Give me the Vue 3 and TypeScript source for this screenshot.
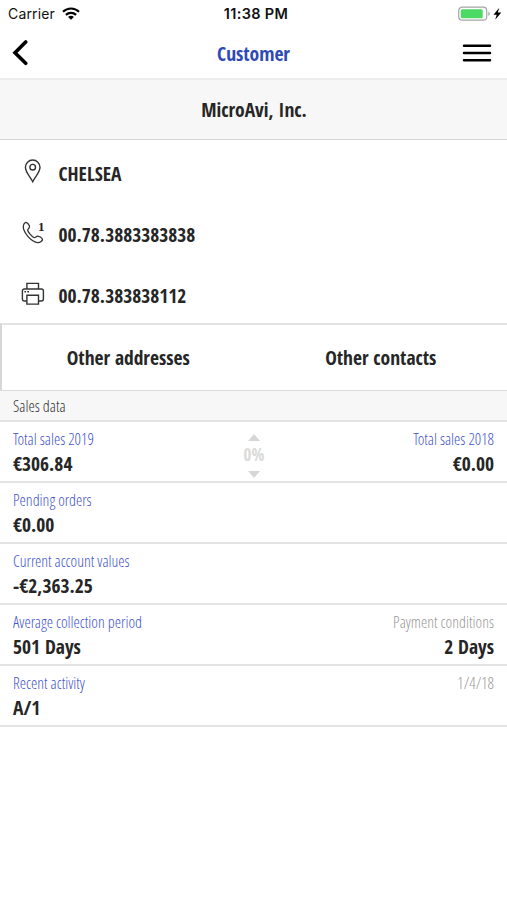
<script setup lang="ts">
interface Cell { label: string; value?: string; muted?: boolean }
interface Row { left: Cell; right?: Cell; change?: string }

const rows: Row[] = [
  { left: { label: 'Total sales 2019', value: '€306.84' }, right: { label: 'Total sales 2018', value: '€0.00' }, change: '0%' },
  { left: { label: 'Pending orders', value: '€0.00' } },
  { left: { label: 'Current account values', value: '-€2,363.25' } },
  { left: { label: 'Average collection period', value: '501 Days' }, right: { label: 'Payment conditions', value: '2 Days', muted: true } },
  { left: { label: 'Recent activity', value: 'A/1' }, right: { label: '1/4/18', muted: true } },
]
</script>

<template>
  <main class="screen">
    <div class="status">
      <div class="carrier">
        <span>Carrier</span>
        <svg width="18" height="13" viewBox="0 0 18 13" fill="none" stroke="#000" stroke-width="2.2">
          <path d="M1 4.800C5.500.4 12.500.4 17 4.800" />
          <path d="M3.900 7.900c2.900-2.800 7.300-2.800 10.200 0" />
          <path d="M6.100 9.900c1.700-1.500 4.100-1.500 5.800 0L9 12.800z" fill="#000" stroke="none" />
        </svg>
      </div>
      <div class="time">11:38 PM</div>
      <div class="power">
        <svg width="44" height="16" viewBox="0 0 44 16">
          <rect x=".7" y="1.200" width="28" height="13" rx="3.500" fill="#fff" stroke="#a5a5a5" stroke-width="1.200" />
          <rect x="2.700" y="3.200" width="22" height="9" rx="1.500" fill="#4cd964" />
          <path d="M30.300 5.500c2 .8 2 3.700 0 4.500z" fill="#a5a5a5" />
          <path d="M41.300 1.800L35.500 8.700h3.200l-1.500 5L43.300 6.600h-3.500z" fill="#000" />
        </svg>
      </div>
    </div>

    <header class="nav">
      <svg width="18" height="28" viewBox="0 0 18 28" fill="none" stroke="#000" stroke-width="3.600" stroke-linecap="round">
        <path d="M15.700 3L5 13.700 15.700 24.300" />
      </svg>
      <h1>Customer</h1>
      <svg class="menu" width="30" height="20" viewBox="0 0 30 20" stroke="#000" stroke-width="2.500" stroke-linecap="round">
        <path d="M2 2.700h26M2 10h26M2 17.200h26" />
      </svg>
    </header>

    <div class="company">MicroAvi, Inc.</div>

    <section class="details">
      <div class="detail">
        <svg width="26" height="26" viewBox="0 0 26 26" fill="none" stroke="#333" stroke-width="1.400">
          <path d="M12.700 23.700C10.500 19.300 5.400 14.300 5.400 9.300a7.300 7.300 0 0 1 14.600 0c0 5-5.100 10-7.300 14.400z" />
          <circle cx="12.700" cy="9.200" r="2.800" />
        </svg>
        <span>CHELSEA</span>
      </div>
      <div class="detail">
        <svg width="26" height="26" viewBox="0 0 26 26" fill="none" stroke="#333" stroke-width="1.300">
          <path d="M3.500 6.200C4 4.200 5.500 3 6.700 3.600c1 .5 2.300 2.300 2.800 3.500.7 1.800-1.900 2.600-1.800 4 .2 2 4 6.400 6.200 7.400 1.500.7 2.300-1.500 3.900-1.300 1.300.2 3.600 1.300 4.300 2.300 1.400 2-2.400 4.500-4.900 4.100C11.500 22.600 2 13 3.500 6.200z" />
          <text class="badge" x="18" y="12.300" stroke="none">1</text>
        </svg>
        <span>00.78.3883383838</span>
      </div>
      <div class="detail">
        <svg width="26" height="26" viewBox="0 0 26 26" fill="none" stroke="#333" stroke-width="1.400">
          <path d="M6.900 9V3.400h11.600V9" />
          <path d="M6.900 21H4.400a2 2 0 0 1-2-2v-8a2 2 0 0 1 2-2h17a2 2 0 0 1 2 2v8a2 2 0 0 1-2 2h-2.900" />
          <path d="M6.900 15.300h11.600v8.800H6.900z" />
          <path d="M4.400 11.700h1.700M7.300 11.700h1.700" stroke-width="1.600" />
        </svg>
        <span>00.78.383838112</span>
      </div>
    </section>

    <nav class="links">
      <div>Other addresses</div>
      <div>Other contacts</div>
    </nav>

    <h2>Sales data</h2>

    <section>
      <div v-for="row in rows" :key="row.left.label" class="row">
        <div class="cell">
          <div class="label">{{ row.left.label }}</div>
          <div class="value">{{ row.left.value }}</div>
        </div>
        <div v-if="row.change" class="change">
          <svg width="12" height="7" viewBox="0 0 12 7"><path d="M0 7L6 0l6 7z" fill="#d6d6d6" /></svg>
          <span>{{ row.change }}</span>
          <svg width="12" height="7" viewBox="0 0 12 7"><path d="M0 0l6 7 6-7z" fill="#d6d6d6" /></svg>
        </div>
        <div v-if="row.right" class="cell end">
          <div class="label" :class="{ muted: row.right.muted }">{{ row.right.label }}</div>
          <div v-if="row.right.value" class="value">{{ row.right.value }}</div>
        </div>
      </div>
    </section>
  </main>
</template>

<style>
body { background: #fff; }
</style>

<style scoped>
.screen {
  width: 507px;
  height: 900px;
  overflow: hidden;
  background: #fff;
  color: #262626;
  font-family: "Open Sans Condensed", "Open Sans", sans-serif;
  font-stretch: 75%;
  font-weight: 700;
  font-size: 19.500px;
}
h1, h2 { margin: 0; }
svg { display: block; flex: none; }
.status {
  display: grid;
  grid-template-columns: 1fr auto 1fr;
  align-items: center;
  height: 27px;
  padding: 0 5px 0 8px;
  font-family: Inter, sans-serif;
  font-stretch: 100%;
  font-size: 14.500px;
  color: #111;
}
.carrier { display: flex; align-items: center; gap: 7px; font-weight: 400; font-size: 14px; letter-spacing: .15px; }
.time { font-weight: 600; letter-spacing: .35px; padding-left: 2px; }
.power { display: flex; justify-content: flex-end; }
.nav {
  box-sizing: border-box;
  display: grid;
  grid-template-columns: 1fr auto 1fr;
  align-items: center;
  height: 53px;
  padding: 0 15px 0 10px;
  border-bottom: 2px solid #ececec;
}
h1 { padding: 2px 0 0 5px; font-size: 19.600px; letter-spacing: -.05px; color: #3049b8; font-weight: 700; }
.menu { justify-self: end; }
.company {
  box-sizing: border-box;
  display: grid;
  place-items: center;
  height: 60px;
  padding-left: 1px;
  background: #f7f7f7;
  border-bottom: 1px solid #d6d6d6;
}
.detail { display: flex; align-items: center; gap: 12.500px; height: 61px; padding-left: 20px; }
.detail span { padding-top: 6px; }
.badge { font: 700 13px "Liberation Serif", serif; fill: #222; }
.links {
  box-sizing: border-box;
  display: grid;
  grid-template-columns: 1fr 1fr;
  align-items: center;
  text-align: center;
  height: 68px;
  border-top: 2px solid #e2e2e2;
  border-bottom: 1px solid #dcdcdc;
  border-left: 2px solid #d6d6d6;
}
h2, .label { font-family: "Open Sans Condensed Light", "Open Sans", sans-serif; font-weight: 300; }
h2 {
  box-sizing: border-box;
  height: 31px;
  padding-left: 13px;
  line-height: 30px;
  font-size: 16px;
  color: #333;
  background: #f7f7f7;
  border-bottom: 2px solid #e4e4e4;
}
.row {
  box-sizing: border-box;
  display: grid;
  grid-template-columns: 1fr auto 1fr;
  height: 61px;
  padding: 4px 13px 0;
  border-bottom: 2px solid #e4e4e4;
}
.label { line-height: 26px; font-size: 16px; color: #3f54cc; }
.label.muted { color: #999; }
.value { line-height: 24px; }
.end { grid-column: 3; text-align: right; }
.change { display: flex; flex-direction: column; align-items: center; padding: 8px 0 0 1px; color: #dadada; font-size: 17px; }
.change span { line-height: 30px; margin-top: -1px; margin-bottom: 1px; }
</style>
